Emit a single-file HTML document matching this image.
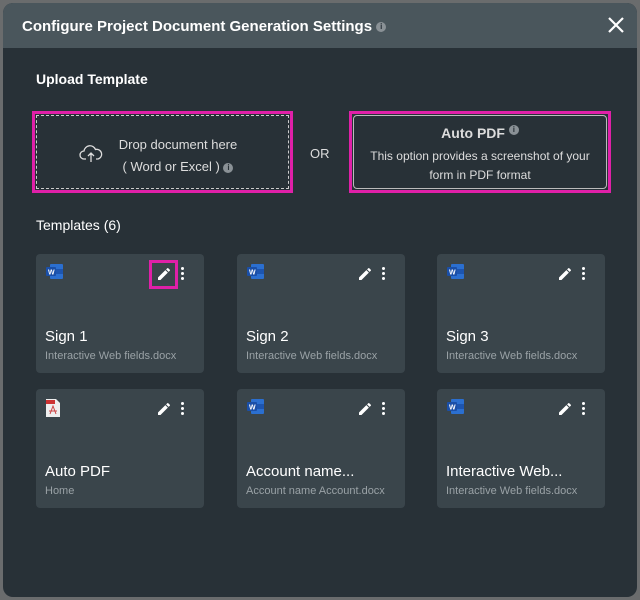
<!DOCTYPE html>
<html><head><style>
*{box-sizing:border-box;margin:0;padding:0}
body{width:640px;height:600px;background:#6a6c6d;font-family:"Liberation Sans",sans-serif;position:relative;overflow:hidden}
.m{position:absolute;left:3px;top:3px;width:634px;height:594px;background:#283137;border-radius:10px;overflow:hidden}
.h{height:45px;background:#4a565c;position:relative}
.h .t{position:absolute;left:19px;top:15px;color:#fff;font-size:15px;font-weight:bold}
.info{display:inline-block;width:10px;height:10px;border-radius:50%;background:#8a9196;color:#283137;font-size:8px;text-align:center;line-height:10px;font-weight:bold;vertical-align:middle}
.x{position:absolute;left:603px;top:12px}
.a{position:absolute;color:#fff}
.box{position:absolute;border:3px solid #e020a8}
.card{position:absolute;width:168px;height:119px;background:#3a454b;border-radius:4px}
.card .n{position:absolute;left:9px;top:74px;color:#fff;font-size:15px}
.card .s{position:absolute;left:9px;top:96px;color:#9aa2a6;font-size:11px}
.card .ic{position:absolute;left:10px;top:10px}
.card .ed{position:absolute;left:120px;top:12px}
.card .dt{position:absolute;left:145px;top:13px;width:3px}
.dt i{display:block;width:3px;height:3px;border-radius:50%;background:#fff;margin-bottom:2px}
</style></head><body>
<div class="m">
<div class="h"><div class="t">Configure Project Document Generation Settings <span class="info">i</span></div>
<svg class="x" width="20" height="20" viewBox="0 0 20 20"><path d="M3 3L17 17M17 3L3 17" stroke="#fff" stroke-width="2.2"/></svg></div>
<div class="a" style="left:33px;top:68px;font-size:14px;font-weight:bold">Upload Template</div>
<div class="box" style="left:29px;top:108px;width:261px;height:82px"><div style="position:absolute;inset:1px;border:1px dashed #ccc"></div>
<svg style="position:absolute;left:44px;top:30px" width="24" height="20" viewBox="0 0 24 20"><path d="M7 15H5a4 4 0 0 1 0-8 6 6 0 0 1 11.5-1.5A4.5 4.5 0 0 1 19 15h-2M12 18V9M9 12l3-3 3 3" fill="none" stroke="#ddd" stroke-width="1.3"/></svg>
<div style="position:absolute;left:78px;top:20px;width:130px;text-align:center;color:#ddd;font-size:13px;line-height:22px">Drop document here<br>( Word or Excel ) <span class="info">i</span></div></div>
<div class="a" style="left:307px;top:143px;font-size:13px;color:#ddd">OR</div>
<div class="box" style="left:346px;top:108px;width:262px;height:82px"><div style="position:absolute;inset:1px;border:1px solid #bbb;border-radius:4px"></div>
<div style="position:absolute;left:0;right:0;top:11px;text-align:center;color:#ddd;font-size:14px;font-weight:bold">Auto PDF <span class="info" style="vertical-align:top">i</span></div>
<div style="position:absolute;left:0;right:0;top:33px;text-align:center;color:#ddd;font-size:12px;line-height:19px">This option provides a screenshot of your<br>form in PDF format</div></div>
<div class="a" style="left:33px;top:214px;font-size:14px">Templates (6)</div>
</div>
<div id="cards"></div>
<script>
const d=[[36,254,"Sign 1","Interactive Web fields.docx",0],[237,254,"Sign 2","Interactive Web fields.docx",0],[437,254,"Sign 3","Interactive Web fields.docx",0],[36,389,"Auto PDF","Home",1],[237,389,"Account name...","Account name Account.docx",0],[437,389,"Interactive Web...","Interactive Web fields.docx",0]];
const w='<svg class="ic" width="17" height="15" viewBox="0 0 17 15"><rect x="4" y="0" width="13" height="15" rx="1" fill="#2b6fd0"/><rect x="4" y="5" width="13" height="5" fill="#1d55b0"/><rect x="0" y="3" width="10" height="9" rx="1" fill="#1a4fa8"/><text x="2" y="10.5" font-size="7" fill="#fff" font-family="Liberation Sans" font-weight="bold">W</text></svg>';
const p='<svg class="ic" width="14" height="18" viewBox="0 0 14 18"><path d="M0 0H10L14 4V18H0Z" fill="#eee"/><rect x="0" y="1" width="9" height="4" fill="#c33"/><path d="M4 15L7 7L10 15M3 12H11" stroke="#c44" fill="none"/></svg>';
let h='';d.forEach((c,i)=>{h+=`<div class="card" style="left:${c[0]}px;top:${c[1]}px">${c[4]?p:w}<svg class="ed" width="16" height="16" viewBox="0 0 24 24"><path d="M3 17.25V21h3.75L17.81 9.94l-3.75-3.75L3 17.25zM20.71 7.04a1 1 0 0 0 0-1.41l-2.34-2.34a1 1 0 0 0-1.41 0l-1.83 1.83 3.75 3.75 1.83-1.83z" fill="#fff"/></svg><div class="dt"><i></i><i></i><i></i></div><div class="n">${c[2]}</div><div class="s">${c[3]}</div>${i==0?'<div style="position:absolute;left:113px;top:6px;width:29px;height:29px;border:3px solid #e020a8"></div>':''}</div>`});
document.getElementById('cards').innerHTML=h;
</script>
</body></html>
